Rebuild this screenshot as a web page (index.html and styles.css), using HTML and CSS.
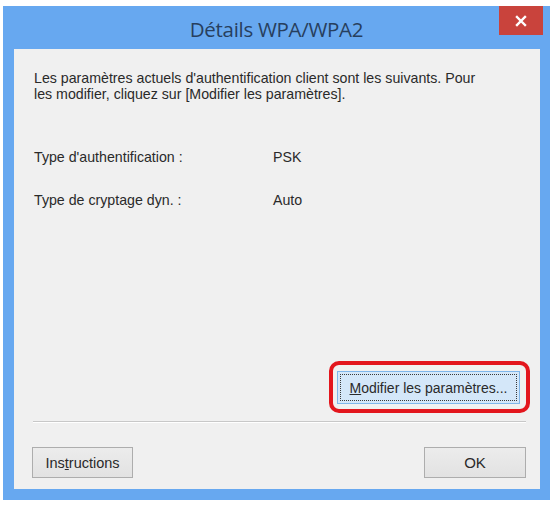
FILE: index.html
```html
<!DOCTYPE html>
<html lang="fr">
<head>
<meta charset="utf-8">
<title>Détails WPA/WPA2</title>
<link rel="stylesheet" href="styles.css">
</head>
<body>
<div class="window">
  <div class="titlebar">
    <span class="title">Détails WPA/WPA2</span>
    <span class="close">
      <svg width="12" height="12" viewBox="0 0 12 12"><path d="M2 2 L10 10 M10 2 L2 10" stroke="#fff" stroke-width="2.4" stroke-linecap="square"/></svg>
    </span>
  </div>
  <div class="client">
    <p class="desc">Les paramètres actuels d'authentification client sont les suivants. Pour les modifier, cliquez sur [Modifier les paramètres].</p>
    <div class="rows">
      <div class="row"><span class="label">Type d'authentification :</span><span class="value">PSK</span></div>
      <div class="row"><span class="label">Type de cryptage dyn. :</span><span class="value">Auto</span></div>
    </div>
    <div class="modrow">
      <div class="highlight">
        <button class="btn btn-focus"><span class="focusrect"><u>M</u>odifier les paramètres...</span></button>
      </div>
    </div>
    <div class="sep"></div>
    <div class="footer">
      <button class="btn btn-instr">Ins<u>t</u>ructions</button>
      <button class="btn btn-ok">OK</button>
    </div>
  </div>
</div>
</body>
</html>
```
FILE: styles.css
```css
* { box-sizing: border-box; }
html, body { margin: 0; padding: 0; background: #ffffff; }
body { width: 554px; height: 506px; overflow: hidden; }

.window {
  margin: 6px 0 0 3px;
  width: 547px;
  height: 494px;
  background: #67a8f0;
  display: flex;
  flex-direction: column;
}

.titlebar {
  position: relative;
  height: 43px;
  display: flex;
  align-items: center;
  justify-content: center;
  padding-top: 3px;
}
.title {
  font-family: "Open Sans", "Noto Sans", sans-serif;
  font-size: 20.5px;
  color: #273f5e;
  letter-spacing: -0.3px;
}
.close {
  position: absolute;
  top: 0;
  right: 7px;
  width: 44px;
  height: 29px;
  background: #c9433c;
  display: flex;
  align-items: center;
  justify-content: center;
}

.client {
  flex: 1;
  margin: 0 10px 11px 11px;
  background: #f0f0f0;
  padding: 21px 20px 0 20px;
  display: flex;
  flex-direction: column;
  font-family: "Liberation Sans", Arial, sans-serif;
  font-size: 14.2px;
  color: #2a2a2a;
}

.desc {
  margin: 0;
  line-height: 16px;
  width: 456px;
}

.rows {
  margin-top: 47px;
  display: flex;
  flex-direction: column;
  gap: 27px;
}
.row { display: flex; line-height: 16px; }
.label { width: 239px; }

.modrow {
  margin-top: 153px;
  display: flex;
  justify-content: flex-end;
  margin-right: -10px;
}
.highlight {
  border: 4px solid #e3161d;
  border-radius: 10px;
  padding: 6px 6px 5px 4px;
}

.btn {
  font-family: "Liberation Sans", Arial, sans-serif;
  font-size: 14px;
  color: #2a2a2a;
  background: linear-gradient(#ececec, #e2e2e2);
  border: 1px solid #adadad;
  padding: 0;
  margin: 0;
  height: 31px;
}
.btn-focus {
  width: 183px;
  height: 33px;
  background: #d4e7f9;
  border: 1px solid #7fb6ea;
  padding: 2px;
  display: flex;
}
.focusrect {
  flex: 1;
  border: 1px dotted #3a3a3a;
  display: flex;
  align-items: center;
  justify-content: center;
}

.sep {
  margin: 8px -6px 0 -1px;
  height: 2px;
  border-top: 1px solid #c8c8c8;
  border-bottom: 1px solid #ffffff;
}

.footer {
  margin-top: 24px;
  display: flex;
  justify-content: space-between;
  margin-right: -6px;
  margin-left: -2px;
}
.btn-instr { width: 101px; font-size: 14.5px; }
.btn-ok { width: 102px; font-size: 15px; }
```
